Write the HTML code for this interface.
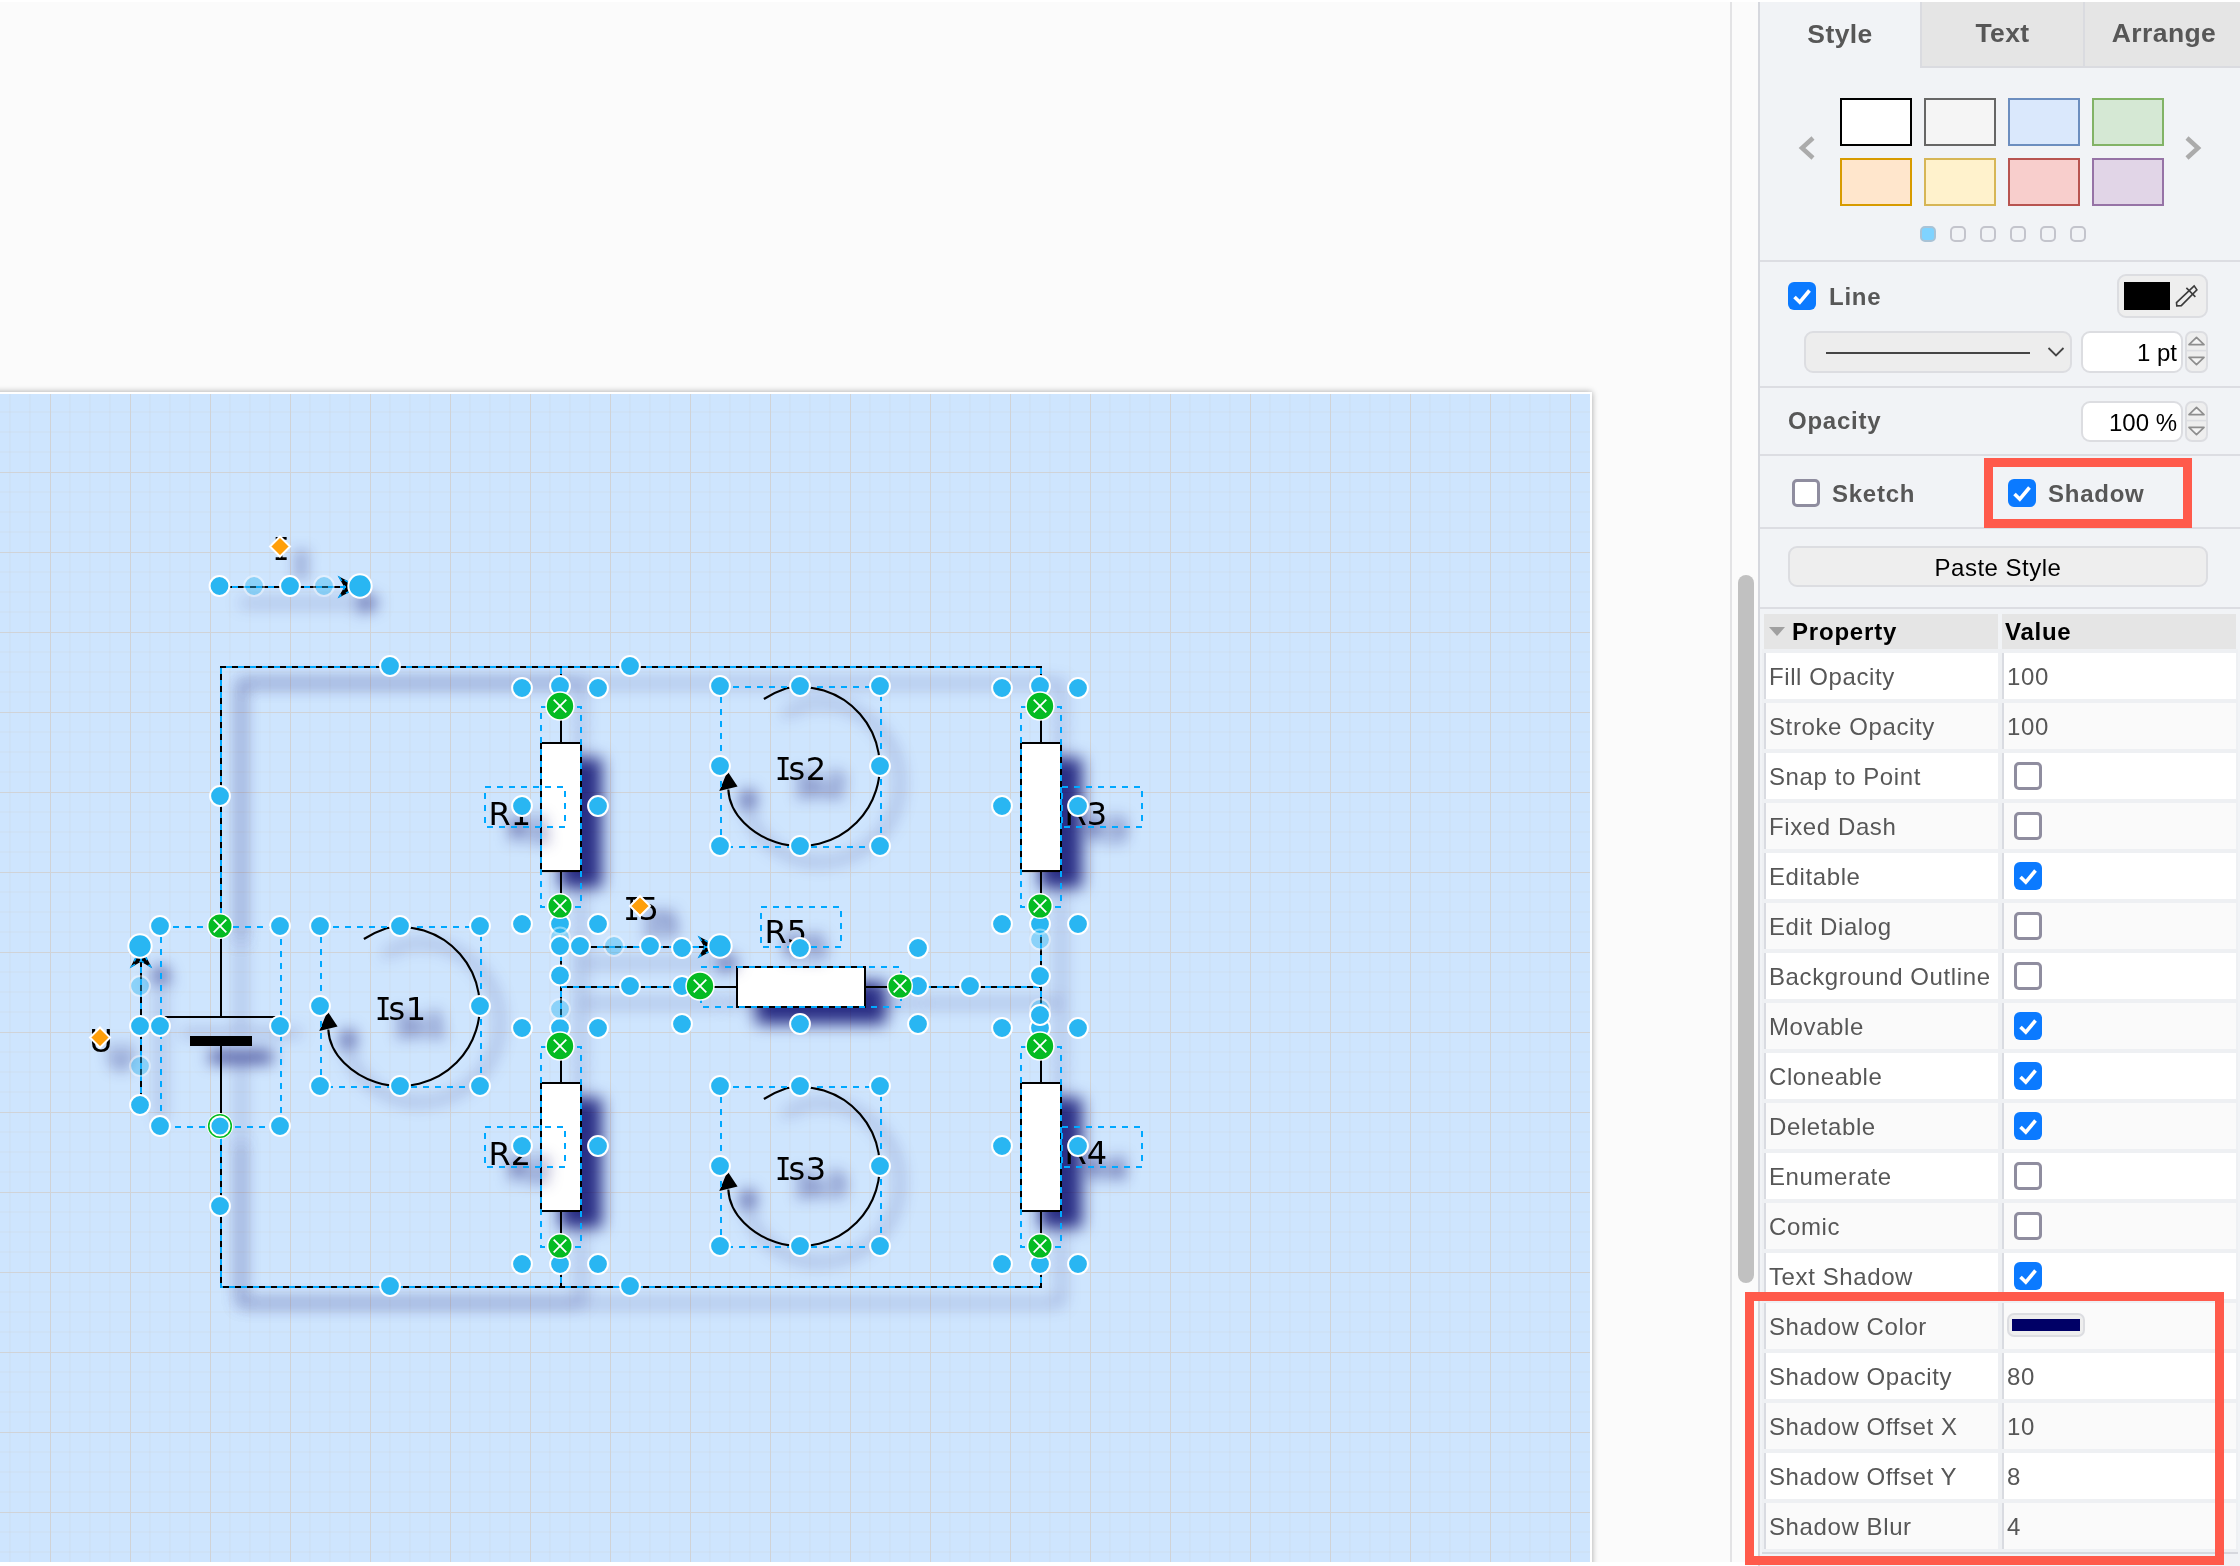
<!DOCTYPE html><html><head><meta charset="utf-8"><title>Shadow style</title><style>
*{box-sizing:border-box;margin:0;padding:0}
html,body{width:2240px;height:1566px;overflow:hidden;background:#fbfbfb}
body{position:relative;font-family:"Liberation Sans",sans-serif;color:#000}
.abs{position:absolute}
#canvas{position:absolute;left:0;top:0;width:1731px;height:1566px}
#topstrip{position:absolute;left:0;top:0;width:2240px;height:2px;background:#fff}
#botstrip{position:absolute;left:0;top:1562px;width:1745px;height:4px;background:#fff}
#split{position:absolute;left:1730px;top:2px;width:2px;height:1560px;background:#e3e3e5}
#thumb{position:absolute;left:1738px;top:575px;width:16px;height:708px;border-radius:8px;background:#c1c1c1}
#panel{position:absolute;left:1758px;top:2px;width:482px;height:1564px;background:#f1f3f6;border-left:2px solid #d6d8de}
.tab{position:absolute;top:2px;height:66px;font-weight:bold;font-size:26.5px;color:#575757;text-align:center;line-height:62px;letter-spacing:.4px}
.tab.in{background:#e5e5e5;border-left:2px solid #dadbe0;border-bottom:2px solid #dadbe0}
.sep{position:absolute;left:1760px;width:480px;height:2px;background:#dcdde2}
.sw{position:absolute;width:72px;height:48px;border:2px solid #000}
.dot{position:absolute;top:226px;width:16px;height:16px;border-radius:5px;border:2px solid #c3c4cc;background:#f1f3f6}
.lbl{position:absolute;font-weight:bold;font-size:24px;color:#575757;white-space:nowrap;line-height:28px;letter-spacing:.75px;margin-top:1px}
.cb{position:absolute;width:28px;height:28px;border-radius:6px}
.cb.on{background:#0b7aff}
.cb.off{background:#fff;border:3px solid #8f8d9f;border-radius:5px}
.inp{position:absolute;background:#fff;border:2px solid #dcdde1;border-radius:9px;font-size:24px;text-align:right;line-height:40px;padding-right:4px;color:#000;white-space:nowrap}
.spin{position:absolute;background:#eeeeee;border:2px solid #dcdde1;border-radius:7px}
.btn{position:absolute;background:#eeeeee;border:2px solid #dcdde1;border-radius:9px}
.row{position:absolute;height:46px;font-size:24px;line-height:48px;letter-spacing:.6px;color:#575757;white-space:nowrap;overflow:hidden}
.pc{left:1764px;width:234px;border-left:2px solid #d9dbe1;padding-left:3px}
.vc{left:2002px;width:234px;border-left:2px solid #d9dbe1;padding-left:3px}
</style></head><body>
<svg id="canvas" width="1731" height="1566" viewBox="0 0 1731 1566"><defs>
<filter id="sh" filterUnits="userSpaceOnUse" x="0" y="380" width="1700" height="1190" color-interpolation-filters="sRGB">
<feGaussianBlur in="SourceAlpha" stdDeviation="8" result="b"/>
<feOffset in="b" dx="20" dy="16" result="o"/>
<feFlood flood-color="#000066" flood-opacity="0.8"/>
<feComposite in2="o" operator="in" result="s"/>
<feMerge><feMergeNode in="s"/><feMergeNode in="SourceGraphic"/></feMerge>
</filter>
<filter id="sht" filterUnits="userSpaceOnUse" x="0" y="380" width="1700" height="1190" color-interpolation-filters="sRGB">
<feGaussianBlur in="SourceAlpha" stdDeviation="7.5" result="b"/>
<feOffset in="b" dx="20" dy="16" result="o"/>
<feFlood flood-color="#000066" flood-opacity="0.92"/>
<feComposite in2="o" operator="in" result="s"/>
<feMerge><feMergeNode in="s"/><feMergeNode in="SourceGraphic"/></feMerge>
</filter>
<filter id="pgsh" filterUnits="userSpaceOnUse" x="-20" y="370" width="1660" height="1220">
<feGaussianBlur in="SourceAlpha" stdDeviation="3"/>
<feComponentTransfer><feFuncA type="linear" slope="0.35"/></feComponentTransfer>
</filter>
<clipPath id="pgclip"><rect x="0" y="394" width="1590" height="1168"/></clipPath>
<clipPath id="cvclip"><rect x="0" y="2" width="1731" height="1560"/></clipPath>
</defs><g clip-path="url(#cvclip)"><rect x="-10" y="392" width="1602" height="1300" fill="#000" filter="url(#pgsh)"/><rect x="-10" y="392" width="1602" height="1300" fill="#fff"/><rect x="-10" y="394" width="1600" height="1300" fill="#cee5fe"/><g clip-path="url(#pgclip)" stroke="#d0d0d0" stroke-width="1"><path d="M9.9 394V1562M29.9 394V1562M69.9 394V1562M89.9 394V1562M109.9 394V1562M149.9 394V1562M169.9 394V1562M189.9 394V1562M229.9 394V1562M249.9 394V1562M269.9 394V1562M309.9 394V1562M329.9 394V1562M349.9 394V1562M389.9 394V1562M409.9 394V1562M429.9 394V1562M469.9 394V1562M489.9 394V1562M509.9 394V1562M549.9 394V1562M569.9 394V1562M589.9 394V1562M629.9 394V1562M649.9 394V1562M669.9 394V1562M709.9 394V1562M729.9 394V1562M749.9 394V1562M789.9 394V1562M809.9 394V1562M829.9 394V1562M869.9 394V1562M889.9 394V1562M909.9 394V1562M949.9 394V1562M969.9 394V1562M989.9 394V1562M1029.9 394V1562M1049.9 394V1562M1069.9 394V1562M1109.9 394V1562M1129.9 394V1562M1149.9 394V1562M1189.9 394V1562M1209.9 394V1562M1229.9 394V1562M1269.9 394V1562M1289.9 394V1562M1309.9 394V1562M1349.9 394V1562M1369.9 394V1562M1389.9 394V1562M1429.9 394V1562M1449.9 394V1562M1469.9 394V1562M1509.9 394V1562M1529.9 394V1562M1549.9 394V1562M0 412.0H1590M0 432.0H1590M0 452.0H1590M0 492.0H1590M0 512.0H1590M0 532.0H1590M0 572.0H1590M0 592.0H1590M0 612.0H1590M0 652.0H1590M0 672.0H1590M0 692.0H1590M0 732.0H1590M0 752.0H1590M0 772.0H1590M0 812.0H1590M0 832.0H1590M0 852.0H1590M0 892.0H1590M0 912.0H1590M0 932.0H1590M0 972.0H1590M0 992.0H1590M0 1012.0H1590M0 1052.0H1590M0 1072.0H1590M0 1092.0H1590M0 1132.0H1590M0 1152.0H1590M0 1172.0H1590M0 1212.0H1590M0 1232.0H1590M0 1252.0H1590M0 1292.0H1590M0 1312.0H1590M0 1332.0H1590M0 1372.0H1590M0 1392.0H1590M0 1412.0H1590M0 1452.0H1590M0 1472.0H1590M0 1492.0H1590M0 1532.0H1590M0 1552.0H1590" opacity="0.3" fill="none"/><path d="M50.5 394V1562M130.5 394V1562M210.5 394V1562M290.5 394V1562M370.5 394V1562M450.5 394V1562M530.5 394V1562M610.5 394V1562M690.5 394V1562M770.5 394V1562M850.5 394V1562M930.5 394V1562M1010.5 394V1562M1090.5 394V1562M1170.5 394V1562M1250.5 394V1562M1330.5 394V1562M1410.5 394V1562M1490.5 394V1562M1570.5 394V1562M0 472.5H1590M0 552.5H1590M0 632.5H1590M0 712.5H1590M0 792.5H1590M0 872.5H1590M0 952.5H1590M0 1032.5H1590M0 1112.5H1590M0 1192.5H1590M0 1272.5H1590M0 1352.5H1590M0 1432.5H1590M0 1512.5H1590" opacity="0.85" fill="none" shape-rendering="crispEdges"/></g><g filter="url(#sh)"><path d="M221 926V667H561V707" fill="none" stroke="#000" stroke-width="2" stroke-miterlimit="10"/></g><g filter="url(#sh)"><path d="M221 926V667H1041V707" fill="none" stroke="#000" stroke-width="2" stroke-miterlimit="10"/></g><g filter="url(#sh)"><path d="M221 1127V1287H561V1247" fill="none" stroke="#000" stroke-width="2" stroke-miterlimit="10"/></g><g filter="url(#sh)"><path d="M221 1127V1287H1041V1247" fill="none" stroke="#000" stroke-width="2" stroke-miterlimit="10"/></g><g filter="url(#sh)"><path d="M561 907V1047" fill="none" stroke="#000" stroke-width="2" stroke-miterlimit="10"/></g><g filter="url(#sh)"><path d="M561 987H701" fill="none" stroke="#000" stroke-width="2" stroke-miterlimit="10"/></g><g filter="url(#sh)"><path d="M901 987H1041" fill="none" stroke="#000" stroke-width="2" stroke-miterlimit="10"/></g><g filter="url(#sh)"><path d="M1041 907V1047" fill="none" stroke="#000" stroke-width="2" stroke-miterlimit="10"/></g><g filter="url(#sh)"><path d="M221 927V1017M161 1017H281M221 1046V1127" fill="none" stroke="#000" stroke-width="2" stroke-miterlimit="10"/><rect x="190" y="1036" width="62" height="10" fill="#000"/></g><g filter="url(#sh)"><path d="M363.9 939.0Q375.2 931.9 386.4 928.2A79.5 79.5 0 1 1 344.0 1062.7Q329.2 1047.9 328.3 1029.5" fill="none" stroke="#000" stroke-width="2.1" stroke-miterlimit="10"/><path d="M327.5 1011.3L337.6 1026.4L319.3 1031.1Z" fill="#000"/></g><g filter="url(#sht)"><text transform="translate(374.96,1019.8) scale(0.85,1)" font-family="DejaVu Sans Mono, monospace" font-size="32" fill="#000">I</text><text x="388.6" y="1019.8" font-family="DejaVu Sans, Verdana, sans-serif" font-size="32" text-anchor="start" fill="#000" letter-spacing="0.6">s1</text></g><g filter="url(#sh)"><path d="M763.9 699.0Q775.2 691.9 786.4 688.2A79.5 79.5 0 1 1 744.0 822.7Q729.2 807.9 728.3 789.5" fill="none" stroke="#000" stroke-width="2.1" stroke-miterlimit="10"/><path d="M727.5 771.3L737.6 786.4L719.3 791.1Z" fill="#000"/></g><g filter="url(#sht)"><text transform="translate(774.96,779.8) scale(0.85,1)" font-family="DejaVu Sans Mono, monospace" font-size="32" fill="#000">I</text><text x="788.6" y="779.8" font-family="DejaVu Sans, Verdana, sans-serif" font-size="32" text-anchor="start" fill="#000" letter-spacing="0.6">s2</text></g><g filter="url(#sh)"><path d="M763.9 1099.0Q775.2 1091.9 786.4 1088.2A79.5 79.5 0 1 1 744.0 1222.7Q729.2 1207.9 728.3 1189.5" fill="none" stroke="#000" stroke-width="2.1" stroke-miterlimit="10"/><path d="M727.5 1171.3L737.6 1186.4L719.3 1191.1Z" fill="#000"/></g><g filter="url(#sht)"><text transform="translate(774.96,1179.8) scale(0.85,1)" font-family="DejaVu Sans Mono, monospace" font-size="32" fill="#000">I</text><text x="788.6" y="1179.8" font-family="DejaVu Sans, Verdana, sans-serif" font-size="32" text-anchor="start" fill="#000" letter-spacing="0.6">s3</text></g><g filter="url(#sh)"><path d="M561 707V743M561 871V907" fill="none" stroke="#000" stroke-width="2" stroke-miterlimit="10"/><rect x="541" y="743" width="40" height="128" fill="#fff" stroke="#000" stroke-width="2"/></g><g filter="url(#sh)"><path d="M561 1047V1083M561 1211V1247" fill="none" stroke="#000" stroke-width="2" stroke-miterlimit="10"/><rect x="541" y="1083" width="40" height="128" fill="#fff" stroke="#000" stroke-width="2"/></g><g filter="url(#sh)"><path d="M1041 707V743M1041 871V907" fill="none" stroke="#000" stroke-width="2" stroke-miterlimit="10"/><rect x="1021" y="743" width="40" height="128" fill="#fff" stroke="#000" stroke-width="2"/></g><g filter="url(#sh)"><path d="M1041 1047V1083M1041 1211V1247" fill="none" stroke="#000" stroke-width="2" stroke-miterlimit="10"/><rect x="1021" y="1083" width="40" height="128" fill="#fff" stroke="#000" stroke-width="2"/></g><g filter="url(#sh)"><path d="M701 987H737M865 987H901" fill="none" stroke="#000" stroke-width="2" stroke-miterlimit="10"/><rect x="737" y="967" width="128" height="40" fill="#fff" stroke="#000" stroke-width="2"/></g><g filter="url(#sh)"><path d="M220 587L346.0 587.0" fill="none" stroke="#000" stroke-width="2" stroke-miterlimit="10"/><path d="M358.0 587.0L339.5 577.5L345.0 587.0L339.5 596.5Z" fill="#000" stroke="#000" stroke-width="1.2" stroke-miterlimit="10"/></g><g filter="url(#sh)"><path d="M561 947L706.0 947.0" fill="none" stroke="#000" stroke-width="2" stroke-miterlimit="10"/><path d="M718.0 947.0L699.5 937.5L705.0 947.0L699.5 956.5Z" fill="#000" stroke="#000" stroke-width="1.2" stroke-miterlimit="10"/></g><g filter="url(#sh)"><path d="M141 1105L141.0 960.0" fill="none" stroke="#000" stroke-width="2" stroke-miterlimit="10"/><path d="M141.0 948.0L131.5 966.5L141.0 961.0L150.5 966.5Z" fill="#000" stroke="#000" stroke-width="1.2" stroke-miterlimit="10"/></g><g filter="url(#sht)"><text x="488.5" y="825" font-family="DejaVu Sans, Verdana, sans-serif" font-size="32" text-anchor="start" fill="#000" >R1</text></g><g filter="url(#sht)"><text x="488.5" y="1164.5" font-family="DejaVu Sans, Verdana, sans-serif" font-size="32" text-anchor="start" fill="#000" >R2</text></g><g filter="url(#sht)"><text x="1064.5" y="824.5" font-family="DejaVu Sans, Verdana, sans-serif" font-size="32" text-anchor="start" fill="#000" >R3</text></g><g filter="url(#sht)"><text x="1064.5" y="1164" font-family="DejaVu Sans, Verdana, sans-serif" font-size="32" text-anchor="start" fill="#000" >R4</text></g><g filter="url(#sht)"><text x="764.5" y="942.5" font-family="DejaVu Sans, Verdana, sans-serif" font-size="32" text-anchor="start" fill="#000" >R5</text></g><g filter="url(#sht)"><text transform="translate(623.46,920) scale(0.85,1)" font-family="DejaVu Sans Mono, monospace" font-size="32" fill="#000">I</text><text x="638.6" y="920" font-family="DejaVu Sans, Verdana, sans-serif" font-size="32" text-anchor="start" fill="#000" >5</text></g><g filter="url(#sht)"><text transform="translate(272.96,559.8) scale(0.85,1)" font-family="DejaVu Sans Mono, monospace" font-size="32" fill="#000">I</text></g><g filter="url(#sht)"><text x="101" y="1052" font-family="DejaVu Sans, Verdana, sans-serif" font-size="32" text-anchor="middle" fill="#000" >U</text></g><path d="M221 926V667H561V707" fill="none" stroke="#00a8ff" stroke-width="2" stroke-dasharray="6 6"/><path d="M221 926V667H1041V707" fill="none" stroke="#00a8ff" stroke-width="2" stroke-dasharray="6 6"/><path d="M221 1127V1287H561V1247" fill="none" stroke="#00a8ff" stroke-width="2" stroke-dasharray="6 6"/><path d="M221 1127V1287H1041V1247" fill="none" stroke="#00a8ff" stroke-width="2" stroke-dasharray="6 6"/><path d="M561 907V1047" fill="none" stroke="#00a8ff" stroke-width="2" stroke-dasharray="6 6"/><path d="M561 987H701" fill="none" stroke="#00a8ff" stroke-width="2" stroke-dasharray="6 6"/><path d="M901 987H1041" fill="none" stroke="#00a8ff" stroke-width="2" stroke-dasharray="6 6"/><path d="M1041 907V1047" fill="none" stroke="#00a8ff" stroke-width="2" stroke-dasharray="6 6"/><path d="M220 587H360" fill="none" stroke="#00a8ff" stroke-width="2" stroke-dasharray="6 6"/><path d="M561 947H720" fill="none" stroke="#00a8ff" stroke-width="2" stroke-dasharray="6 6"/><path d="M141 1105V946" fill="none" stroke="#00a8ff" stroke-width="2" stroke-dasharray="6 6"/><path d="M358.0 587.0L339.5 577.5L345.0 587.0L339.5 596.5Z" fill="none" stroke="#00a8ff" stroke-width="1.6" stroke-dasharray="5 5"/><path d="M718.0 947.0L699.5 937.5L705.0 947.0L699.5 956.5Z" fill="none" stroke="#00a8ff" stroke-width="1.6" stroke-dasharray="5 5"/><path d="M141.0 948.0L131.5 966.5L141.0 961.0L150.5 966.5Z" fill="none" stroke="#00a8ff" stroke-width="1.6" stroke-dasharray="5 5"/><rect x="541" y="707" width="40" height="200" fill="none" stroke="#00a8ff" stroke-width="2" stroke-dasharray="6 6"/><rect x="541" y="1047" width="40" height="200" fill="none" stroke="#00a8ff" stroke-width="2" stroke-dasharray="6 6"/><rect x="1021" y="707" width="40" height="200" fill="none" stroke="#00a8ff" stroke-width="2" stroke-dasharray="6 6"/><rect x="1021" y="1047" width="40" height="200" fill="none" stroke="#00a8ff" stroke-width="2" stroke-dasharray="6 6"/><rect x="701" y="967" width="200" height="40" fill="none" stroke="#00a8ff" stroke-width="2" stroke-dasharray="6 6"/><rect x="161" y="927" width="120" height="200" fill="none" stroke="#00a8ff" stroke-width="2" stroke-dasharray="6 6"/><rect x="321" y="927" width="160" height="160" fill="none" stroke="#00a8ff" stroke-width="2" stroke-dasharray="6 6"/><rect x="721" y="687" width="160" height="160" fill="none" stroke="#00a8ff" stroke-width="2" stroke-dasharray="6 6"/><rect x="721" y="1087" width="160" height="160" fill="none" stroke="#00a8ff" stroke-width="2" stroke-dasharray="6 6"/><rect x="485" y="787" width="80" height="40" fill="none" stroke="#00a8ff" stroke-width="2" stroke-dasharray="6 6"/><rect x="485" y="1127" width="80" height="40" fill="none" stroke="#00a8ff" stroke-width="2" stroke-dasharray="6 6"/><rect x="1062" y="787" width="80" height="40" fill="none" stroke="#00a8ff" stroke-width="2" stroke-dasharray="6 6"/><rect x="1062" y="1127" width="80" height="40" fill="none" stroke="#00a8ff" stroke-width="2" stroke-dasharray="6 6"/><rect x="761" y="907" width="80" height="40" fill="none" stroke="#00a8ff" stroke-width="2" stroke-dasharray="6 6"/><circle cx="390" cy="666" r="9.9" fill="#29b6f2" stroke="#fff" stroke-width="2"/><circle cx="630" cy="666" r="9.9" fill="#29b6f2" stroke="#fff" stroke-width="2"/><circle cx="220" cy="796" r="9.9" fill="#29b6f2" stroke="#fff" stroke-width="2"/><circle cx="220" cy="1206" r="9.9" fill="#29b6f2" stroke="#fff" stroke-width="2"/><circle cx="390" cy="1286" r="9.9" fill="#29b6f2" stroke="#fff" stroke-width="2"/><circle cx="630" cy="1286" r="9.9" fill="#29b6f2" stroke="#fff" stroke-width="2"/><circle cx="560" cy="686" r="9.9" fill="#29b6f2" stroke="#fff" stroke-width="2"/><circle cx="1040" cy="686" r="9.9" fill="#29b6f2" stroke="#fff" stroke-width="2"/><circle cx="219.5" cy="586" r="9.9" fill="#29b6f2" stroke="#fff" stroke-width="2"/><circle cx="254" cy="586" r="9.9" fill="#29b6f2" stroke="#fff" stroke-width="2" opacity="0.4"/><circle cx="290" cy="586" r="9.9" fill="#29b6f2" stroke="#fff" stroke-width="2"/><circle cx="324" cy="586" r="9.9" fill="#29b6f2" stroke="#fff" stroke-width="2" opacity="0.4"/><circle cx="360" cy="586" r="11.7" fill="#29b6f2" stroke="#fff" stroke-width="2"/><path d="M280 536.5L290 546.5L280 556.5L270 546.5Z" fill="#ff9f0a" stroke="#fff" stroke-width="2"/><circle cx="140" cy="1105" r="9.9" fill="#29b6f2" stroke="#fff" stroke-width="2"/><circle cx="140" cy="1066" r="9.9" fill="#29b6f2" stroke="#fff" stroke-width="2" opacity="0.4"/><circle cx="140" cy="1026" r="9.9" fill="#29b6f2" stroke="#fff" stroke-width="2"/><circle cx="140" cy="986" r="9.9" fill="#29b6f2" stroke="#fff" stroke-width="2" opacity="0.4"/><circle cx="140" cy="946" r="11.7" fill="#29b6f2" stroke="#fff" stroke-width="2"/><path d="M100 1027.5L110 1037.5L100 1047.5L90 1037.5Z" fill="#ff9f0a" stroke="#fff" stroke-width="2"/><circle cx="160" cy="926" r="9.9" fill="#29b6f2" stroke="#fff" stroke-width="2"/><circle cx="220.0" cy="926" r="9.9" fill="#29b6f2" stroke="#fff" stroke-width="2"/><circle cx="280" cy="926" r="9.9" fill="#29b6f2" stroke="#fff" stroke-width="2"/><circle cx="160" cy="1026.0" r="9.9" fill="#29b6f2" stroke="#fff" stroke-width="2"/><circle cx="280" cy="1026.0" r="9.9" fill="#29b6f2" stroke="#fff" stroke-width="2"/><circle cx="160" cy="1126" r="9.9" fill="#29b6f2" stroke="#fff" stroke-width="2"/><circle cx="220.0" cy="1126" r="9.9" fill="#29b6f2" stroke="#fff" stroke-width="2"/><circle cx="280" cy="1126" r="9.9" fill="#29b6f2" stroke="#fff" stroke-width="2"/><circle cx="320" cy="926" r="9.9" fill="#29b6f2" stroke="#fff" stroke-width="2"/><circle cx="400.0" cy="926" r="9.9" fill="#29b6f2" stroke="#fff" stroke-width="2"/><circle cx="480" cy="926" r="9.9" fill="#29b6f2" stroke="#fff" stroke-width="2"/><circle cx="320" cy="1006.0" r="9.9" fill="#29b6f2" stroke="#fff" stroke-width="2"/><circle cx="480" cy="1006.0" r="9.9" fill="#29b6f2" stroke="#fff" stroke-width="2"/><circle cx="320" cy="1086" r="9.9" fill="#29b6f2" stroke="#fff" stroke-width="2"/><circle cx="400.0" cy="1086" r="9.9" fill="#29b6f2" stroke="#fff" stroke-width="2"/><circle cx="480" cy="1086" r="9.9" fill="#29b6f2" stroke="#fff" stroke-width="2"/><circle cx="720" cy="686" r="9.9" fill="#29b6f2" stroke="#fff" stroke-width="2"/><circle cx="800.0" cy="686" r="9.9" fill="#29b6f2" stroke="#fff" stroke-width="2"/><circle cx="880" cy="686" r="9.9" fill="#29b6f2" stroke="#fff" stroke-width="2"/><circle cx="720" cy="766.0" r="9.9" fill="#29b6f2" stroke="#fff" stroke-width="2"/><circle cx="880" cy="766.0" r="9.9" fill="#29b6f2" stroke="#fff" stroke-width="2"/><circle cx="720" cy="846" r="9.9" fill="#29b6f2" stroke="#fff" stroke-width="2"/><circle cx="800.0" cy="846" r="9.9" fill="#29b6f2" stroke="#fff" stroke-width="2"/><circle cx="880" cy="846" r="9.9" fill="#29b6f2" stroke="#fff" stroke-width="2"/><circle cx="720" cy="1086" r="9.9" fill="#29b6f2" stroke="#fff" stroke-width="2"/><circle cx="800.0" cy="1086" r="9.9" fill="#29b6f2" stroke="#fff" stroke-width="2"/><circle cx="880" cy="1086" r="9.9" fill="#29b6f2" stroke="#fff" stroke-width="2"/><circle cx="720" cy="1166.0" r="9.9" fill="#29b6f2" stroke="#fff" stroke-width="2"/><circle cx="880" cy="1166.0" r="9.9" fill="#29b6f2" stroke="#fff" stroke-width="2"/><circle cx="720" cy="1246" r="9.9" fill="#29b6f2" stroke="#fff" stroke-width="2"/><circle cx="800.0" cy="1246" r="9.9" fill="#29b6f2" stroke="#fff" stroke-width="2"/><circle cx="880" cy="1246" r="9.9" fill="#29b6f2" stroke="#fff" stroke-width="2"/><circle cx="522" cy="688" r="9.9" fill="#29b6f2" stroke="#fff" stroke-width="2"/><circle cx="598" cy="688" r="9.9" fill="#29b6f2" stroke="#fff" stroke-width="2"/><circle cx="522" cy="806.0" r="9.9" fill="#29b6f2" stroke="#fff" stroke-width="2"/><circle cx="598" cy="806.0" r="9.9" fill="#29b6f2" stroke="#fff" stroke-width="2"/><circle cx="522" cy="924" r="9.9" fill="#29b6f2" stroke="#fff" stroke-width="2"/><circle cx="560.0" cy="924" r="9.9" fill="#29b6f2" stroke="#fff" stroke-width="2"/><circle cx="598" cy="924" r="9.9" fill="#29b6f2" stroke="#fff" stroke-width="2"/><circle cx="1002" cy="688" r="9.9" fill="#29b6f2" stroke="#fff" stroke-width="2"/><circle cx="1078" cy="688" r="9.9" fill="#29b6f2" stroke="#fff" stroke-width="2"/><circle cx="1002" cy="806.0" r="9.9" fill="#29b6f2" stroke="#fff" stroke-width="2"/><circle cx="1078" cy="806.0" r="9.9" fill="#29b6f2" stroke="#fff" stroke-width="2"/><circle cx="1002" cy="924" r="9.9" fill="#29b6f2" stroke="#fff" stroke-width="2"/><circle cx="1040.0" cy="924" r="9.9" fill="#29b6f2" stroke="#fff" stroke-width="2"/><circle cx="1078" cy="924" r="9.9" fill="#29b6f2" stroke="#fff" stroke-width="2"/><circle cx="522" cy="1028" r="9.9" fill="#29b6f2" stroke="#fff" stroke-width="2"/><circle cx="560.0" cy="1028" r="9.9" fill="#29b6f2" stroke="#fff" stroke-width="2"/><circle cx="598" cy="1028" r="9.9" fill="#29b6f2" stroke="#fff" stroke-width="2"/><circle cx="522" cy="1146.0" r="9.9" fill="#29b6f2" stroke="#fff" stroke-width="2"/><circle cx="598" cy="1146.0" r="9.9" fill="#29b6f2" stroke="#fff" stroke-width="2"/><circle cx="522" cy="1264" r="9.9" fill="#29b6f2" stroke="#fff" stroke-width="2"/><circle cx="560.0" cy="1264" r="9.9" fill="#29b6f2" stroke="#fff" stroke-width="2"/><circle cx="598" cy="1264" r="9.9" fill="#29b6f2" stroke="#fff" stroke-width="2"/><circle cx="1002" cy="1028" r="9.9" fill="#29b6f2" stroke="#fff" stroke-width="2"/><circle cx="1040.0" cy="1028" r="9.9" fill="#29b6f2" stroke="#fff" stroke-width="2"/><circle cx="1078" cy="1028" r="9.9" fill="#29b6f2" stroke="#fff" stroke-width="2"/><circle cx="1002" cy="1146.0" r="9.9" fill="#29b6f2" stroke="#fff" stroke-width="2"/><circle cx="1078" cy="1146.0" r="9.9" fill="#29b6f2" stroke="#fff" stroke-width="2"/><circle cx="1002" cy="1264" r="9.9" fill="#29b6f2" stroke="#fff" stroke-width="2"/><circle cx="1040.0" cy="1264" r="9.9" fill="#29b6f2" stroke="#fff" stroke-width="2"/><circle cx="1078" cy="1264" r="9.9" fill="#29b6f2" stroke="#fff" stroke-width="2"/><circle cx="682" cy="948" r="9.9" fill="#29b6f2" stroke="#fff" stroke-width="2"/><circle cx="800.0" cy="948" r="9.9" fill="#29b6f2" stroke="#fff" stroke-width="2"/><circle cx="918" cy="948" r="9.9" fill="#29b6f2" stroke="#fff" stroke-width="2"/><circle cx="682" cy="986.0" r="9.9" fill="#29b6f2" stroke="#fff" stroke-width="2"/><circle cx="918" cy="986.0" r="9.9" fill="#29b6f2" stroke="#fff" stroke-width="2"/><circle cx="682" cy="1024" r="9.9" fill="#29b6f2" stroke="#fff" stroke-width="2"/><circle cx="800.0" cy="1024" r="9.9" fill="#29b6f2" stroke="#fff" stroke-width="2"/><circle cx="918" cy="1024" r="9.9" fill="#29b6f2" stroke="#fff" stroke-width="2"/><circle cx="560" cy="937.5" r="9.9" fill="#29b6f2" stroke="#fff" stroke-width="2" opacity="0.4"/><circle cx="560" cy="946" r="9.9" fill="#29b6f2" stroke="#fff" stroke-width="2"/><circle cx="580" cy="946" r="9.9" fill="#29b6f2" stroke="#fff" stroke-width="2"/><circle cx="560" cy="975.5" r="9.9" fill="#29b6f2" stroke="#fff" stroke-width="2"/><circle cx="560" cy="1009" r="9.9" fill="#29b6f2" stroke="#fff" stroke-width="2" opacity="0.4"/><circle cx="614" cy="946" r="9.9" fill="#29b6f2" stroke="#fff" stroke-width="2" opacity="0.4"/><circle cx="650" cy="946" r="9.9" fill="#29b6f2" stroke="#fff" stroke-width="2"/><circle cx="720" cy="946" r="11.7" fill="#29b6f2" stroke="#fff" stroke-width="2"/><path d="M640 896L650 906L640 916L630 906Z" fill="#ff9f0a" stroke="#fff" stroke-width="2"/><circle cx="630" cy="986" r="9.9" fill="#29b6f2" stroke="#fff" stroke-width="2"/><circle cx="970" cy="986" r="9.9" fill="#29b6f2" stroke="#fff" stroke-width="2"/><circle cx="1040" cy="939.5" r="9.9" fill="#29b6f2" stroke="#fff" stroke-width="2" opacity="0.4"/><circle cx="1040" cy="976" r="9.9" fill="#29b6f2" stroke="#fff" stroke-width="2"/><circle cx="1040" cy="1009" r="9.9" fill="#29b6f2" stroke="#fff" stroke-width="2" opacity="0.4"/><circle cx="1040" cy="1015" r="9.9" fill="#29b6f2" stroke="#fff" stroke-width="2"/><g><circle cx="560" cy="706" r="14.7" fill="#fff"/><circle cx="560" cy="706" r="13.2" fill="#04bb22"/><path d="M553.7 699.7L566.3 712.3M566.3 699.7L553.7 712.3" stroke="#fff" stroke-width="1.8" fill="none"/></g><g><circle cx="560" cy="906" r="13.0" fill="#fff"/><circle cx="560" cy="906" r="11.5" fill="#04bb22"/><path d="M553.7 899.7L566.3 912.3M566.3 899.7L553.7 912.3" stroke="#fff" stroke-width="1.8" fill="none"/></g><g><circle cx="1040" cy="706" r="14.7" fill="#fff"/><circle cx="1040" cy="706" r="13.2" fill="#04bb22"/><path d="M1033.7 699.7L1046.3 712.3M1046.3 699.7L1033.7 712.3" stroke="#fff" stroke-width="1.8" fill="none"/></g><g><circle cx="1040" cy="906" r="13.0" fill="#fff"/><circle cx="1040" cy="906" r="11.5" fill="#04bb22"/><path d="M1033.7 899.7L1046.3 912.3M1046.3 899.7L1033.7 912.3" stroke="#fff" stroke-width="1.8" fill="none"/></g><g><circle cx="560" cy="1046" r="14.7" fill="#fff"/><circle cx="560" cy="1046" r="13.2" fill="#04bb22"/><path d="M553.7 1039.7L566.3 1052.3M566.3 1039.7L553.7 1052.3" stroke="#fff" stroke-width="1.8" fill="none"/></g><g><circle cx="560" cy="1246" r="13.0" fill="#fff"/><circle cx="560" cy="1246" r="11.5" fill="#04bb22"/><path d="M553.7 1239.7L566.3 1252.3M566.3 1239.7L553.7 1252.3" stroke="#fff" stroke-width="1.8" fill="none"/></g><g><circle cx="1040" cy="1046" r="14.7" fill="#fff"/><circle cx="1040" cy="1046" r="13.2" fill="#04bb22"/><path d="M1033.7 1039.7L1046.3 1052.3M1046.3 1039.7L1033.7 1052.3" stroke="#fff" stroke-width="1.8" fill="none"/></g><g><circle cx="1040" cy="1246" r="13.0" fill="#fff"/><circle cx="1040" cy="1246" r="11.5" fill="#04bb22"/><path d="M1033.7 1239.7L1046.3 1252.3M1046.3 1239.7L1033.7 1252.3" stroke="#fff" stroke-width="1.8" fill="none"/></g><g><circle cx="700" cy="986" r="14.7" fill="#fff"/><circle cx="700" cy="986" r="13.2" fill="#04bb22"/><path d="M693.7 979.7L706.3 992.3M706.3 979.7L693.7 992.3" stroke="#fff" stroke-width="1.8" fill="none"/></g><g><circle cx="900" cy="986" r="13.0" fill="#fff"/><circle cx="900" cy="986" r="11.5" fill="#04bb22"/><path d="M893.7 979.7L906.3 992.3M906.3 979.7L893.7 992.3" stroke="#fff" stroke-width="1.8" fill="none"/></g><g><circle cx="220" cy="926" r="13.0" fill="#fff"/><circle cx="220" cy="926" r="11.5" fill="#04bb22"/><path d="M213.7 919.7L226.3 932.3M226.3 919.7L213.7 932.3" stroke="#fff" stroke-width="1.8" fill="none"/></g><circle cx="220" cy="1126" r="12.6" fill="#fff" stroke="#fff" stroke-width="1"/><circle cx="220" cy="1126" r="11.3" fill="none" stroke="#04bb22" stroke-width="1.6"/><circle cx="220" cy="1126" r="8.6" fill="#29b6f2"/></g></svg>
<div id="ui" style="position:absolute;left:0;top:0;width:2240px;height:1566px;will-change:transform">
<div id="topstrip"></div><div id="botstrip"></div><div id="split"></div><div id="thumb"></div>
<div id="panel"></div>
<div class="tab" style="left:1760px;width:160px;line-height:65px">Style</div>
<div class="tab in" style="left:1920px;width:163px">Text</div>
<div class="tab in" style="left:2083px;width:160px">Arrange</div>
<div class="sw" style="left:1840px;top:98px;background:#ffffff;border-color:#000000"></div>
<div class="sw" style="left:1924px;top:98px;background:#f5f5f5;border-color:#666666"></div>
<div class="sw" style="left:2008px;top:98px;background:#dae8fc;border-color:#6c8ebf"></div>
<div class="sw" style="left:2092px;top:98px;background:#d5e8d4;border-color:#82b366"></div>
<div class="sw" style="left:1840px;top:158px;background:#ffe6cc;border-color:#d79b00"></div>
<div class="sw" style="left:1924px;top:158px;background:#fff2cc;border-color:#d6b656"></div>
<div class="sw" style="left:2008px;top:158px;background:#f8cecc;border-color:#b85450"></div>
<div class="sw" style="left:2092px;top:158px;background:#e1d5e7;border-color:#9673a6"></div>
<svg class="abs" style="left:1796px;top:134px" width="24" height="28" viewBox="0 0 24 28"><path d="M17 4L6 14L17 24" fill="none" stroke="#ababab" stroke-width="4.5"/></svg>
<svg class="abs" style="left:2180px;top:134px" width="24" height="28" viewBox="0 0 24 28"><path d="M7 4L18 14L7 24" fill="none" stroke="#ababab" stroke-width="4.5"/></svg>
<div class="dot" style="left:1920px;background:#7fd3ff;border-color:#a9c3d6"></div>
<div class="dot" style="left:1950px;"></div>
<div class="dot" style="left:1980px;"></div>
<div class="dot" style="left:2010px;"></div>
<div class="dot" style="left:2040px;"></div>
<div class="dot" style="left:2070px;"></div>
<div class="sep" style="top:260px"></div>
<div class="cb on" style="left:1788px;top:282px"><svg width="28" height="28" viewBox="0 0 28 28" style="display:block"><path d="M6.5 15L11.8 20.2L21.5 8.5" fill="none" stroke="#fff" stroke-width="3.6" stroke-linecap="butt" stroke-linejoin="miter"/></svg></div>
<div class="lbl" style="left:1829px;top:282px">Line</div>
<div class="btn" style="left:2117px;top:274px;width:91px;height:44px"></div>
<div class="abs" style="left:2124px;top:282px;width:46px;height:28px;background:#000"></div>
<svg class="abs" style="left:2174px;top:284px" width="26" height="26" viewBox="0 0 26 26"><path d="M20.2 1.9L2.5 18.6L2.8 21.8L7.3 21.6L22.9 5.9Z" fill="none" stroke="#3c3c3c" stroke-width="1.6" stroke-linejoin="miter"/><path d="M12.4 3.9L21.4 12.9" stroke="#3c3c3c" stroke-width="1.6" fill="none"/></svg>
<div class="btn" style="left:1804px;top:331px;width:268px;height:42px;background:#ededed"></div>
<div class="abs" style="left:1826px;top:352px;width:204px;height:2px;background:#444"></div>
<svg class="abs" style="left:2046px;top:344px" width="20" height="16" viewBox="0 0 20 16"><path d="M2.5 4L10 11.5L17.5 4" fill="none" stroke="#444" stroke-width="1.8"/></svg>
<div class="inp" style="left:2081px;top:331px;width:102px;height:42px">1 pt</div>
<div class="spin" style="left:2185px;top:331px;width:23px;height:42px"><svg width="19" height="38" viewBox="0 0 19 38" style="display:block"><path d="M0 17.6H19" stroke="#dcdde1" stroke-width="1.6"/><path d="M2 11.6L9.5 4.4L17 11.6Z" fill="#f4f4f4" stroke="#8e8e8e" stroke-width="1.7" stroke-linejoin="round"/><path d="M2 24.4L9.5 31.6L17 24.4Z" fill="#f4f4f4" stroke="#8e8e8e" stroke-width="1.7" stroke-linejoin="round"/></svg></div>
<div class="sep" style="top:386px"></div>
<div class="lbl" style="left:1788px;top:406px">Opacity</div>
<div class="inp" style="left:2081px;top:401px;width:102px;height:41px">100 %</div>
<div class="spin" style="left:2185px;top:401px;width:23px;height:41px"><svg width="19" height="38" viewBox="0 0 19 38" style="display:block"><path d="M0 17.6H19" stroke="#dcdde1" stroke-width="1.6"/><path d="M2 11.6L9.5 4.4L17 11.6Z" fill="#f4f4f4" stroke="#8e8e8e" stroke-width="1.7" stroke-linejoin="round"/><path d="M2 24.4L9.5 31.6L17 24.4Z" fill="#f4f4f4" stroke="#8e8e8e" stroke-width="1.7" stroke-linejoin="round"/></svg></div>
<div class="sep" style="top:454px"></div>
<div class="cb off" style="left:1792px;top:479px"></div>
<div class="lbl" style="left:1832px;top:479px">Sketch</div>
<div class="cb on" style="left:2008px;top:479px"><svg width="28" height="28" viewBox="0 0 28 28" style="display:block"><path d="M6.5 15L11.8 20.2L21.5 8.5" fill="none" stroke="#fff" stroke-width="3.6" stroke-linecap="butt" stroke-linejoin="miter"/></svg></div>
<div class="lbl" style="left:2048px;top:479px">Shadow</div>
<div class="sep" style="top:527px"></div>
<div class="btn" style="left:1788px;top:546px;width:420px;height:41px;text-align:center;font-size:24px;line-height:39.5px;letter-spacing:.5px">Paste Style</div>
<div class="sep" style="top:607px"></div>
<div class="abs" style="left:1764px;top:614px;width:234px;height:35px;background:#e5e5e5"></div>
<div class="abs" style="left:2002px;top:614px;width:234px;height:35px;background:#e5e5e5"></div>
<svg class="abs" style="left:1768px;top:626px" width="18" height="12" viewBox="0 0 18 12"><path d="M1 1H17L9 10Z" fill="#a0a0a0"/></svg>
<div class="abs" style="left:1792px;top:618px;font-weight:bold;font-size:24px;line-height:28px;letter-spacing:.8px">Property</div>
<div class="abs" style="left:2005px;top:618px;font-weight:bold;font-size:24px;line-height:28px;letter-spacing:.75px">Value</div>
<div class="abs" style="left:1762px;top:649px;width:476px;height:904px;background:#eef0f3"></div>
<div class="row pc" style="top:653px;background:#ffffff">Fill Opacity</div>
<div class="row vc" style="top:653px;background:#ffffff">100</div>
<div class="row pc" style="top:703px;background:#fafafa">Stroke Opacity</div>
<div class="row vc" style="top:703px;background:#fafafa">100</div>
<div class="row pc" style="top:753px;background:#ffffff">Snap to Point</div>
<div class="row vc" style="top:753px;background:#ffffff"></div>
<div class="cb off" style="left:2014px;top:762px"></div>
<div class="row pc" style="top:803px;background:#fafafa">Fixed Dash</div>
<div class="row vc" style="top:803px;background:#fafafa"></div>
<div class="cb off" style="left:2014px;top:812px"></div>
<div class="row pc" style="top:853px;background:#ffffff">Editable</div>
<div class="row vc" style="top:853px;background:#ffffff"></div>
<div class="cb on" style="left:2014px;top:862px"><svg width="28" height="28" viewBox="0 0 28 28" style="display:block"><path d="M6.5 15L11.8 20.2L21.5 8.5" fill="none" stroke="#fff" stroke-width="3.6" stroke-linecap="butt" stroke-linejoin="miter"/></svg></div>
<div class="row pc" style="top:903px;background:#fafafa">Edit Dialog</div>
<div class="row vc" style="top:903px;background:#fafafa"></div>
<div class="cb off" style="left:2014px;top:912px"></div>
<div class="row pc" style="top:953px;background:#ffffff">Background Outline</div>
<div class="row vc" style="top:953px;background:#ffffff"></div>
<div class="cb off" style="left:2014px;top:962px"></div>
<div class="row pc" style="top:1003px;background:#fafafa">Movable</div>
<div class="row vc" style="top:1003px;background:#fafafa"></div>
<div class="cb on" style="left:2014px;top:1012px"><svg width="28" height="28" viewBox="0 0 28 28" style="display:block"><path d="M6.5 15L11.8 20.2L21.5 8.5" fill="none" stroke="#fff" stroke-width="3.6" stroke-linecap="butt" stroke-linejoin="miter"/></svg></div>
<div class="row pc" style="top:1053px;background:#ffffff">Cloneable</div>
<div class="row vc" style="top:1053px;background:#ffffff"></div>
<div class="cb on" style="left:2014px;top:1062px"><svg width="28" height="28" viewBox="0 0 28 28" style="display:block"><path d="M6.5 15L11.8 20.2L21.5 8.5" fill="none" stroke="#fff" stroke-width="3.6" stroke-linecap="butt" stroke-linejoin="miter"/></svg></div>
<div class="row pc" style="top:1103px;background:#fafafa">Deletable</div>
<div class="row vc" style="top:1103px;background:#fafafa"></div>
<div class="cb on" style="left:2014px;top:1112px"><svg width="28" height="28" viewBox="0 0 28 28" style="display:block"><path d="M6.5 15L11.8 20.2L21.5 8.5" fill="none" stroke="#fff" stroke-width="3.6" stroke-linecap="butt" stroke-linejoin="miter"/></svg></div>
<div class="row pc" style="top:1153px;background:#ffffff">Enumerate</div>
<div class="row vc" style="top:1153px;background:#ffffff"></div>
<div class="cb off" style="left:2014px;top:1162px"></div>
<div class="row pc" style="top:1203px;background:#fafafa">Comic</div>
<div class="row vc" style="top:1203px;background:#fafafa"></div>
<div class="cb off" style="left:2014px;top:1212px"></div>
<div class="row pc" style="top:1253px;background:#ffffff">Text Shadow</div>
<div class="row vc" style="top:1253px;background:#ffffff"></div>
<div class="cb on" style="left:2014px;top:1262px"><svg width="28" height="28" viewBox="0 0 28 28" style="display:block"><path d="M6.5 15L11.8 20.2L21.5 8.5" fill="none" stroke="#fff" stroke-width="3.6" stroke-linecap="butt" stroke-linejoin="miter"/></svg></div>
<div class="row pc" style="top:1303px;background:#fafafa">Shadow Color</div>
<div class="row vc" style="top:1303px;background:#fafafa"></div>
<div class="btn" style="left:2007px;top:1313px;width:78px;height:24px;border-radius:7px"></div>
<div class="abs" style="left:2012px;top:1319px;width:68px;height:12px;background:#000066"></div>
<div class="row pc" style="top:1353px;background:#ffffff">Shadow Opacity</div>
<div class="row vc" style="top:1353px;background:#ffffff">80</div>
<div class="row pc" style="top:1403px;background:#fafafa">Shadow Offset X</div>
<div class="row vc" style="top:1403px;background:#fafafa">10</div>
<div class="row pc" style="top:1453px;background:#ffffff">Shadow Offset Y</div>
<div class="row vc" style="top:1453px;background:#ffffff">8</div>
<div class="row pc" style="top:1503px;background:#fafafa">Shadow Blur</div>
<div class="row vc" style="top:1503px;background:#fafafa">4</div>
<div class="abs" style="left:1762px;top:1552px;width:476px;height:2px;background:#d6d8de"></div>
<div class="abs" style="left:1984px;top:458px;width:208px;height:70px;border:9px solid #ff5a4b"></div>
<div class="abs" style="left:1745px;top:1292px;width:479px;height:273px;border:9px solid #ff5a4b"></div>
</div>
</body></html>
